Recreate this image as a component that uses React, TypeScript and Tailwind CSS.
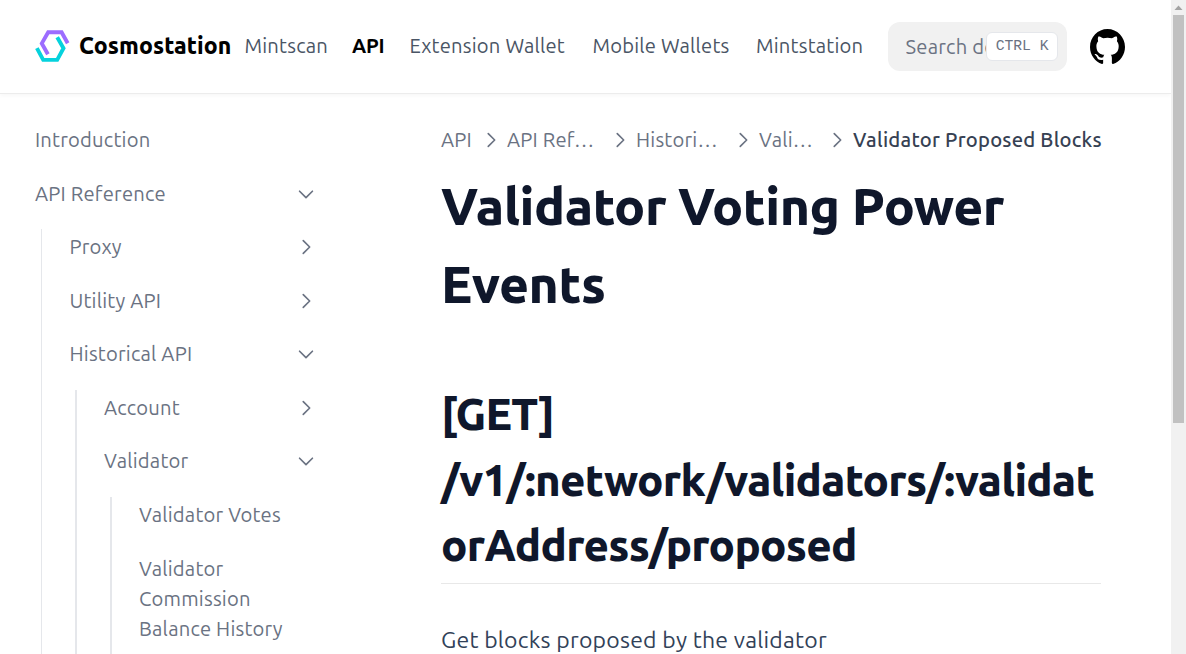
import type { ReactNode } from 'react'

function Chevron({ down = false, className = '' }: { down?: boolean; className?: string }) {
  return (
    <svg viewBox="0 0 24 24" fill="none" stroke="currentColor" strokeWidth="1.8" strokeLinecap="round" strokeLinejoin="round" className={`h-[22px] w-[22px] shrink-0 ${className}`}>
      <path d={down ? 'M5 9l7 7 7-7' : 'M9 5l7 7-7 7'} />
    </svg>
  )
}

function Logo() {
  return (
    <svg viewBox="0 0 35 34" fill="none" strokeWidth="3.9" className="mb-[2px] h-[34px] w-[35px] shrink-0">
      <path d="M32.7 14.2 26.6 3.2H13.2L6.8 14.4 12.9 25.2" stroke="#9c6cff" />
      <path d="M1.9 19.2 8.2 30.9H22.2L28.5 19.2 22.2 8.2" stroke="#05d2dd" />
    </svg>
  )
}

function Header() {
  return (
    <header className="flex h-[94px] shrink-0 items-center border-b border-[#ececec] pl-[35px] text-[20.2px] tracking-[0.2px] text-gray-600 shadow-[0_2px_4px_rgba(0,0,0,0.03)]">
      <a className="flex items-center">
        <Logo />
        <span className="ml-[9px] w-[165.5px] text-[23px] font-extrabold tracking-[0.08px] text-black">Cosmostation</span>
      </a>
      <nav className="flex items-center whitespace-nowrap">
        <a className="w-[107.5px]">Mintscan</a>
        <a className="w-[57.5px] font-semibold tracking-[-0.2px] text-black">API</a>
        <a className="w-[183px]">Extension Wallet</a>
        <a className="w-[163.5px]">Mobile Wallets</a>
        <a className="w-[132px]">Mintstation</a>
      </nav>
      <div className="flex h-[49px] w-[179px] items-center rounded-[12px] bg-[#f1f1f1] pl-[17.6px] text-gray-500">
        <span className="mt-[2px] w-[80px] shrink-0 overflow-hidden whitespace-nowrap">Search documentation…</span>
        <kbd className="flex h-[29px] w-[72px] shrink-0 items-center justify-center rounded-[6px] border border-gray-200 bg-white pl-px font-['Liberation_Mono',monospace] text-[14.7px] tracking-normal whitespace-pre">CTRL K</kbd>
      </div>
      <svg viewBox="3 3 18 18" fill="#000" className="ml-[23px] h-[35px] w-[35px]">
        <path d="M12 3C7.0275 3 3 7.12937 3 12.2276C3 16.3109 5.57625 19.7597 9.15374 20.9824C9.60374 21.0631 9.77249 20.7863 9.77249 20.5441C9.77249 20.3249 9.76125 19.5982 9.76125 18.8254C7.5 19.2522 6.915 18.2602 6.735 17.7412C6.63375 17.4759 6.19499 16.6569 5.8125 16.4378C5.4975 16.2647 5.0475 15.838 5.80124 15.8264C6.51 15.8149 7.01625 16.4954 7.18499 16.7723C7.99499 18.1679 9.28875 17.7758 9.80625 17.5335C9.885 16.9337 10.1212 16.53 10.38 16.2993C8.3775 16.0687 6.285 15.2728 6.285 11.7432C6.285 10.7397 6.63375 9.9092 7.20749 9.26326C7.1175 9.03257 6.8025 8.08674 7.2975 6.81794C7.2975 6.81794 8.05125 6.57571 9.77249 7.76377C10.4925 7.55615 11.2575 7.45234 12.0225 7.45234C12.7875 7.45234 13.5525 7.55615 14.2725 7.76377C15.9937 6.56418 16.7475 6.81794 16.7475 6.81794C17.2424 8.08674 16.9275 9.03257 16.8375 9.26326C17.4113 9.9092 17.76 10.7281 17.76 11.7432C17.76 15.2843 15.6563 16.0687 13.6537 16.2993C13.98 16.5877 14.2613 17.1414 14.2613 18.0065C14.2613 19.2407 14.25 20.2326 14.25 20.5441C14.25 20.7863 14.4188 21.0746 14.8688 20.9824C16.6554 20.364 18.2079 19.1866 19.3078 17.6162C20.4077 16.0457 20.9995 14.1611 21 12.2276C21 7.12937 16.9725 3 12 3Z" />
      </svg>
    </header>
  )
}

function Item({ children, open }: { children: ReactNode; open?: boolean }) {
  return (
    <div className="flex items-center justify-between py-[8.85px] pr-[9px] leading-[30px]">
      <span>{children}</span>
      {open !== undefined && <Chevron down={open} />}
    </div>
  )
}

function Group({ line, children }: { line: string; children: ReactNode }) {
  return (
    <div className="flex">
      <div className={`mt-[6px] shrink-0 bg-gray-200 ${line}`} />
      <div className="flex flex-1 flex-col gap-[5.9px] pb-1">{children}</div>
    </div>
  )
}

function Sidebar() {
  return (
    <aside className="flex w-[291px] shrink-0 flex-col gap-[5.9px] pt-[22.1px] text-[20.2px] tracking-[0.2px] text-gray-500">
      <Item>Introduction</Item>
      <Item open>API Reference</Item>
      <Group line="ml-[6px] mr-[27.5px] w-px">
        <Item open={false}>Proxy</Item>
        <Item open={false}>Utility API</Item>
        <Item open>Historical API</Item>
        <Group line="ml-[5.5px] mr-[27px] w-[2px]">
          <Item open={false}>Account</Item>
          <Item open>Validator</Item>
          <Group line="ml-[6px] mr-[27px] w-[2px]">
            <Item>Validator Votes</Item>
            <Item>
              Validator
              <br />
              Commission
              <br />
              Balance History
            </Item>
          </Group>
        </Group>
      </Group>
    </aside>
  )
}

function Crumb({ children, width }: { children: ReactNode; width: string }) {
  return (
    <>
      <span className={`shrink-0 ${width}`}>{children}</span>
      <Chevron className="mr-[5px]" />
    </>
  )
}

function Content() {
  return (
    <main className="ml-[115px] w-[660px] shrink-0 pt-[31px] text-slate-900">
      <div className="flex h-[30px] items-center text-[20.2px] leading-[30px] tracking-[0.2px] whitespace-nowrap text-gray-500">
        <Crumb width="w-[39px]">API</Crumb>
        <Crumb width="w-[102px]">API Ref…</Crumb>
        <Crumb width="w-[96px]">Histori…</Crumb>
        <Crumb width="w-[67px]">Vali…</Crumb>
        <span className="font-medium tracking-[0.24px] text-gray-700">Validator Proposed Blocks</span>
      </div>
      <h1 className="mt-[12px] text-[51.5px] leading-[78px] font-extrabold tracking-[-0.0085em]">
        Validator Voting Power
        <br />
        Events
      </h1>
      <h2 className="mt-[58px] border-b border-[#e8e8e8] pb-[5px] text-[43.7px] leading-[65.5px] font-extrabold tracking-[-0.0165em]">
        [GET]
        <br />
        /v1/:network/validators/:validat
        <br />
        orAddress/proposed
      </h2>
      <p className="mt-[35px] text-[23px] leading-[41px] tracking-[0.23px] text-slate-700">Get blocks proposed by the validator</p>
    </main>
  )
}

export default function App() {
  return (
    <div className="flex h-[654px] w-[1186px] overflow-hidden bg-white font-['Ubuntu','Noto_Sans',sans-serif]">
      <div className="flex w-[1171px] shrink-0 flex-col overflow-hidden">
        <Header />
        <div className="flex min-h-0 flex-1 overflow-hidden pl-[35px]">
          <Sidebar />
          <Content />
        </div>
      </div>
      <div className="flex w-[15px] shrink-0 flex-col items-center bg-[#f1f1f1]">
        <svg viewBox="0 0 15 15" className="h-[15px] w-[15px] shrink-0">
          <path d="M3.5 10 7.5 5.5 11.5 10Z" fill="#a3a3a3" />
        </svg>
        <div className="h-[408px] w-[11px] bg-[#c1c1c1]" />
      </div>
    </div>
  )
}
